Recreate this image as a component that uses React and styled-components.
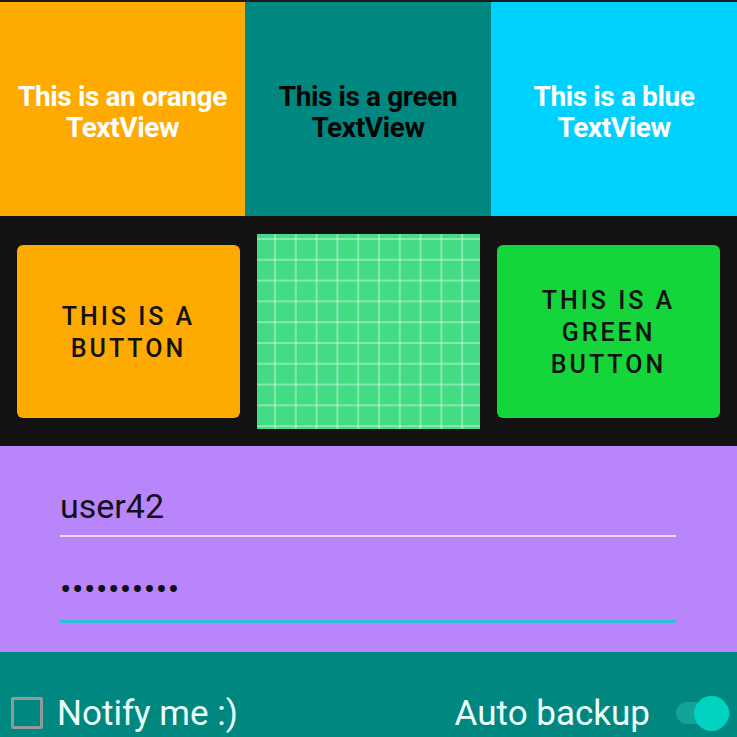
import React from "react";
import styled, { createGlobalStyle } from "styled-components";

const GlobalStyles = createGlobalStyle`
  html, body {
    margin: 0;
    padding: 0;
    background: #121212;
  }
  body {
    font-family: "Roboto", "Liberation Sans", sans-serif;
  }
`;

const colors = {
  orange: "#ffaa00",
  teal: "#008780",
  blue: "#00d2ff",
  dark: "#121212",
  mint: "#43dc85",
  green: "#14d53a",
  purple: "#b985fb",
  cyan: "#2cc1d8",
};

const Screen = styled.div`
  width: 737px;
  height: 737px;
  overflow: hidden;
  display: flex;
  flex-direction: column;
  border-top: 2px solid #1c1c1c;
  box-sizing: border-box;
`;

const TextRow = styled.section`
  display: grid;
  grid-template-columns: 245px 246px 246px;
  height: 214px;
`;

const ColorText = styled.div`
  display: flex;
  align-items: center;
  justify-content: center;
  text-align: center;
  background: ${(p) => p.$bg};
  color: ${(p) => p.$fg};
  font-weight: 700;
  font-size: 28px;
  line-height: 31px;
  letter-spacing: -0.4px;
  padding-top: 6px;
`;

const ButtonRow = styled.section`
  display: grid;
  grid-template-columns: repeat(3, 1fr);
  gap: 17px;
  align-items: center;
  padding: 0 17px;
  height: 230px;
  background: ${colors.dark};
`;

const BigButton = styled.button`
  height: 173px;
  border: none;
  border-radius: 6px;
  background: ${(p) => p.$bg};
  color: #111;
  font-family: "Roboto", sans-serif;
  font-weight: 500;
  font-size: 25px;
  line-height: 32px;
  letter-spacing: 3px;
  text-transform: uppercase;
  padding: 4px 8px 0;
`;

const GridPicture = styled.div`
  height: 195px;
  background-color: ${colors.mint};
  background-image:
    linear-gradient(to right, rgba(255, 255, 255, 0.35) 2px, transparent 2px),
    linear-gradient(to bottom, rgba(255, 255, 255, 0.35) 2px, transparent 2px);
  background-size: 20.8px 20.8px;
  background-position: 17px 4px;
`;

const FormPanel = styled.section`
  height: 206px;
  background: ${colors.purple};
  display: flex;
  flex-direction: column;
  padding: 36px 61px 0 60px;
  box-sizing: border-box;
  gap: 21px;
`;

const Field = styled.input`
  display: block;
  width: 100%;
  box-sizing: border-box;
  background: transparent;
  border: none;
  border-bottom: ${(p) => (p.$focused ? `3px solid ${colors.cyan}` : "2px solid #f1d6f6")};
  outline: none;
  font-family: "Roboto", sans-serif;
  font-size: ${(p) => (p.$focused ? "34px" : "34px")};
  color: #121018;
  padding: 0 0 ${(p) => (p.$focused ? "0" : "6px")} 0;
  height: ${(p) => (p.$focused ? "65px" : "55px")};
  letter-spacing: ${(p) => (p.$focused ? "0.5px" : "0")};
`;

const OptionsBar = styled.section`
  flex: 1;
  background: ${colors.teal};
  display: flex;
  align-items: flex-end;
  justify-content: space-between;
  padding: 0 7px 0 11px;
`;

const Option = styled.label`
  display: flex;
  align-items: center;
  gap: ${(p) => p.$gap || 14}px;
  color: #eafffc;
  font-size: 35px;
  height: 40px;
  margin-bottom: 4px;
`;

const CheckBox = styled.span`
  width: 26px;
  height: 26px;
  border: 3px solid #8d9c9a;
  border-radius: 2px;
`;

const Toggle = styled.span`
  position: relative;
  width: 54px;
  height: 22px;
  border-radius: 11px;
  background: #13a397;
  margin-left: 6px;
`;

const Thumb = styled.span`
  position: absolute;
  right: 1px;
  top: -6px;
  width: 35px;
  height: 35px;
  border-radius: 50%;
  background: #00d3bf;
`;

const App = () => (
  <Screen>
    <GlobalStyles />
    <TextRow>
      <ColorText $bg={colors.orange} $fg="#ffffff">
        This is an orange
        <br />
        TextView
      </ColorText>
      <ColorText $bg={colors.teal} $fg="#050505">
        This is a green
        <br />
        TextView
      </ColorText>
      <ColorText $bg={colors.blue} $fg="#ffffff">
        This is a blue
        <br />
        TextView
      </ColorText>
    </TextRow>

    <ButtonRow>
      <BigButton $bg={colors.orange}>
        This is a
        <br />
        button
      </BigButton>
      <GridPicture />
      <BigButton $bg={colors.green}>
        This is a
        <br />
        green
        <br />
        button
      </BigButton>
    </ButtonRow>

    <FormPanel>
      <Field type="text" defaultValue="user42" readOnly />
      <Field type="password" defaultValue="1234567890" readOnly $focused />
    </FormPanel>

    <OptionsBar>
      <Option>
        <CheckBox />
        Notify me :)
      </Option>
      <Option $gap={20}>
        Auto backup
        <Toggle>
          <Thumb />
        </Toggle>
      </Option>
    </OptionsBar>
  </Screen>
);

export default App;
